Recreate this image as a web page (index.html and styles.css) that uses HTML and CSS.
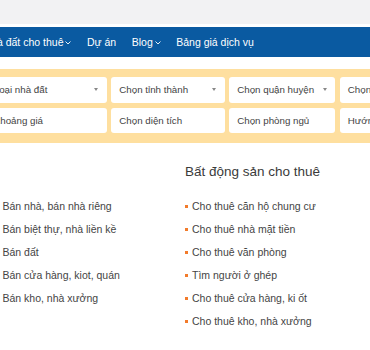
FILE: index.html
```html
<!DOCTYPE html>
<html lang="vi">
<head>
<meta charset="utf-8">
<title>Bất động sản</title>
<link rel="stylesheet" href="styles.css">
</head>
<body>
<div class="topbar"></div>
<nav class="nav">
  <div class="nav-inner">
    <a class="nav-item first">Nhà đất cho thuê <svg class="chev" viewBox="0 0 6 4" width="6" height="4"><path d="M0.5 0.5 L3 3 L5.5 0.5" fill="none" stroke="#fff" stroke-width="0.9"/></svg></a>
    <a class="nav-item">Dự án</a>
    <a class="nav-item">Blog <svg class="chev" viewBox="0 0 6 4" width="6" height="4"><path d="M0.5 0.5 L3 3 L5.5 0.5" fill="none" stroke="#fff" stroke-width="0.9"/></svg></a>
    <a class="nav-item">Bảng giá dịch vụ</a>
  </div>
</nav>
<section class="search">
  <div class="search-grid">
    <div class="field select">Loại nhà đất<span class="caret"></span></div>
    <div class="field select">Chọn tỉnh thành<span class="caret"></span></div>
    <div class="field select">Chọn quận huyện<span class="caret"></span></div>
    <div class="field select">Chọn phường xã<span class="caret"></span></div>
    <div class="field">Khoảng giá</div>
    <div class="field">Chọn diện tích</div>
    <div class="field">Chọn phòng ngủ</div>
    <div class="field">Hướng nhà</div>
  </div>
</section>
<section class="links">
  <div class="col">
    <h3 class="col-title hidden">Bất động sản bán</h3>
    <ul class="list">
      <li>Bán nhà, bán nhà riêng</li>
      <li>Bán biệt thự, nhà liền kề</li>
      <li>Bán đất</li>
      <li>Bán cửa hàng, kiot, quán</li>
      <li>Bán kho, nhà xưởng</li>
    </ul>
  </div>
  <div class="col">
    <h3 class="col-title">Bất động sản cho thuê</h3>
    <ul class="list">
      <li>Cho thuê căn hộ chung cư</li>
      <li>Cho thuê nhà mặt tiền</li>
      <li>Cho thuê văn phòng</li>
      <li>Tìm người ở ghép</li>
      <li>Cho thuê cửa hàng, ki ốt</li>
      <li>Cho thuê kho, nhà xưởng</li>
    </ul>
  </div>
</section>
</body>
</html>
```
FILE: styles.css
```css
html, body {
  margin: 0;
  padding: 0;
  background: #fff;
  overflow: hidden;
}
body {
  font-family: "Liberation Sans", Arial, sans-serif;
  width: 370px;
}
.topbar {
  height: 24px;
  background: #f2f2f3;
  margin-bottom: 3px;
}
.nav {
  height: 30px;
  background: #0a5aa1;
  display: flex;
  align-items: center;
  overflow: hidden;
}
.nav-inner {
  display: flex;
  align-items: center;
  gap: 15.5px;
  margin-left: -16.5px;
  white-space: nowrap;
}
.nav-item {
  color: #fff;
  font-size: 10.5px;
  display: flex;
  align-items: center;
  gap: 2px;
}
.chev {
  margin-top: 1px;
}
.search {
  margin-top: 12px;
  background: #fedf9f;
  padding: 8px 0 10px;
  overflow: hidden;
}
.search-grid {
  display: grid;
  grid-template-columns: 121px 113.3px 106px 113px;
  column-gap: 4.6px;
  row-gap: 5px;
  margin-left: -14.3px;
  width: max-content;
}
.field {
  background: #fff;
  border-radius: 3px;
  height: 25.5px;
  padding: 0 8px;
  display: flex;
  align-items: center;
  justify-content: space-between;
  font-size: 9.75px;
  color: #444;
  white-space: nowrap;
  overflow: hidden;
}
.caret {
  width: 0;
  height: 0;
  border-left: 2.8px solid transparent;
  border-right: 2.8px solid transparent;
  border-top: 3.5px solid #888;
  margin-right: 0.5px;
}
.links {
  display: flex;
  margin-left: -4.5px;
  margin-top: 21px;
}
.col {
  width: 189.5px;
  flex: none;
}
.col-title {
  margin: 0 0 15px;
  font-size: 13.5px;
  line-height: 16px;
  font-weight: normal;
  color: #3a3a3a;
  white-space: nowrap;
}
.hidden {
  visibility: hidden;
}
.list {
  list-style: none;
  margin: 0;
  padding: 0;
}
.list li {
  font-size: 10.5px;
  line-height: 23px;
  color: #444;
  display: flex;
  align-items: center;
  gap: 4.5px;
  white-space: nowrap;
}
.list li::before {
  content: "";
  width: 2.5px;
  height: 2.5px;
  background: #f27b2b;
  flex: none;
}
```
